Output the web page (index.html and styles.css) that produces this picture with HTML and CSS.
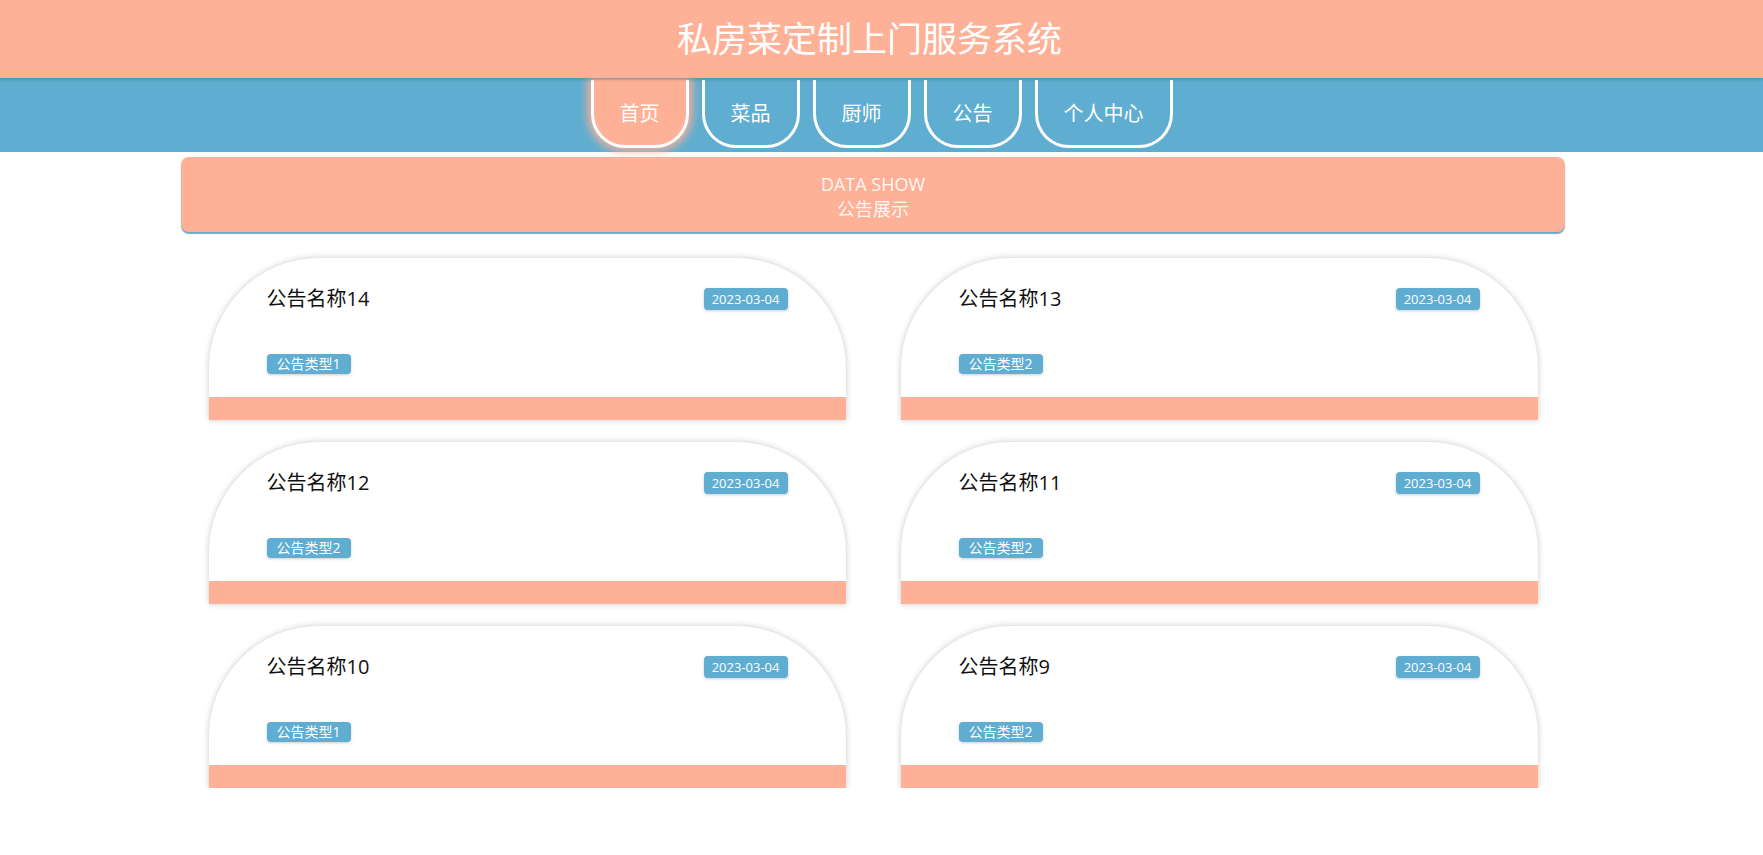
FILE: index.html
```html
<!DOCTYPE html>
<html lang="zh-CN">
<head>
    <meta charset="UTF-8">
    <meta name="viewport" content="width=device-width, initial-scale=1.0">
    <title>私房菜定制上门服务系统</title>
    <link rel="stylesheet" href="styles.css">
</head>
<body>
    <!-- 顶部标题 -->
    <header class="header">
        <h1>私房菜定制上门服务系统</h1>
    </header>

    <!-- 导航 -->
    <nav class="nav">
        <a href="#" class="active">首页</a>
        <a href="#">菜品</a>
        <a href="#">厨师</a>
        <a href="#">公告</a>
        <a href="#">个人中心</a>
    </nav>

    <div class="main">
        <div class="content">
            <div class="banner">
                <p>DATA SHOW</p>
                <p>公告展示</p>
            </div>

            <!-- 公告列表 -->
            <div class="news-list">
                <div class="news-card">
                    <div class="news-body">
                        <div class="news-top">
                            <span class="news-title">公告名称14</span>
                            <span class="news-date">2023-03-04</span>
                        </div>
                        <span class="news-type">公告类型1</span>
                    </div>
                    <div class="news-foot"></div>
                </div>
                <div class="news-card">
                    <div class="news-body">
                        <div class="news-top">
                            <span class="news-title">公告名称13</span>
                            <span class="news-date">2023-03-04</span>
                        </div>
                        <span class="news-type">公告类型2</span>
                    </div>
                    <div class="news-foot"></div>
                </div>
                <div class="news-card">
                    <div class="news-body">
                        <div class="news-top">
                            <span class="news-title">公告名称12</span>
                            <span class="news-date">2023-03-04</span>
                        </div>
                        <span class="news-type">公告类型2</span>
                    </div>
                    <div class="news-foot"></div>
                </div>
                <div class="news-card">
                    <div class="news-body">
                        <div class="news-top">
                            <span class="news-title">公告名称11</span>
                            <span class="news-date">2023-03-04</span>
                        </div>
                        <span class="news-type">公告类型2</span>
                    </div>
                    <div class="news-foot"></div>
                </div>
                <div class="news-card">
                    <div class="news-body">
                        <div class="news-top">
                            <span class="news-title">公告名称10</span>
                            <span class="news-date">2023-03-04</span>
                        </div>
                        <span class="news-type">公告类型1</span>
                    </div>
                    <div class="news-foot"></div>
                </div>
                <div class="news-card">
                    <div class="news-body">
                        <div class="news-top">
                            <span class="news-title">公告名称9</span>
                            <span class="news-date">2023-03-04</span>
                        </div>
                        <span class="news-type">公告类型2</span>
                    </div>
                    <div class="news-foot"></div>
                </div>
            </div>
        </div>
    </div>
</body>
</html>
```

FILE: styles.css
```css
body {
    margin: 0;
    font-family: "Open Sans", "Noto Sans CJK SC", sans-serif;
    background-color: #fff;
}
.header {
    height: 78px;
    background-color: #ffb197;
    display: flex;
    align-items: center;
    justify-content: center;
    box-shadow: 0 2px 3px rgba(0, 0, 0, 0.15);
    position: relative;
    z-index: 2;
}
.header h1 {
    margin: 0;
    padding-right: 24px;
    font-size: 35px;
    font-weight: normal;
    line-height: 42px;
    color: #fff;
}
.nav {
    height: 74px;
    padding-top: 2px;
    box-sizing: border-box;
    background-color: #5fadd0;
    display: flex;
    justify-content: center;
    align-items: flex-start;
    gap: 13px;
}
.nav a {
    height: 68px;
    padding: 0 26px;
    box-sizing: border-box;
    border: 3px solid #fff;
    border-top: none;
    border-radius: 0 0 34px 34px;
    font-size: 20px;
    line-height: 68px;
    color: #fff;
    text-decoration: none;
}
.nav a.active {
    background-color: #ffb197;
    box-shadow: 0 0 10px 3px #ffb197;
}
.main {
    padding-right: 17px;
}
.content {
    width: 1384px;
    margin: 0 auto;
    padding-top: 5px;
}
.banner {
    height: 75px;
    padding-top: 4px;
    box-sizing: border-box;
    border-radius: 8px;
    background-color: #ffb197;
    box-shadow: 0 2px 1px #6fa8c6;
    display: flex;
    flex-direction: column;
    justify-content: center;
    align-items: center;
    color: rgba(255, 255, 255, 0.92);
    font-size: 18px;
}
.banner p {
    margin: 0;
    line-height: 25px;
}
.news-list {
    margin-top: 26px;
    display: grid;
    grid-template-columns: 637px 637px;
    column-gap: 55px;
    row-gap: 22px;
    justify-content: center;
}
.news-card {
    height: 162px;
    background-color: #fff;
    border-radius: 110px 110px 0 0;
    box-shadow: 0 0 6px rgba(0, 0, 0, 0.22);
    overflow: hidden;
    display: flex;
    flex-direction: column;
}
.news-body {
    flex: 1;
    padding: 27px 58px 0;
    display: flex;
    flex-direction: column;
    align-items: flex-start;
}
.news-top {
    width: 100%;
    display: flex;
    justify-content: space-between;
    align-items: center;
}
.news-title {
    font-size: 20px;
    line-height: 28px;
    color: #111;
}
.news-date {
    height: 22px;
    padding: 0 8px;
    border-radius: 4px;
    background-color: #5fadd0;
    box-shadow: 0 1px 3px rgba(0, 0, 0, 0.2);
    font-size: 13px;
    line-height: 22px;
    color: #fff;
}
.news-type {
    margin-top: 41px;
    height: 20px;
    padding: 0 10px;
    border-radius: 4px;
    background-color: #5fadd0;
    box-shadow: 0 1px 3px rgba(0, 0, 0, 0.2);
    font-size: 14px;
    line-height: 20px;
    color: #fff;
}
.news-foot {
    height: 23px;
    background-color: #ffb197;
}
```
